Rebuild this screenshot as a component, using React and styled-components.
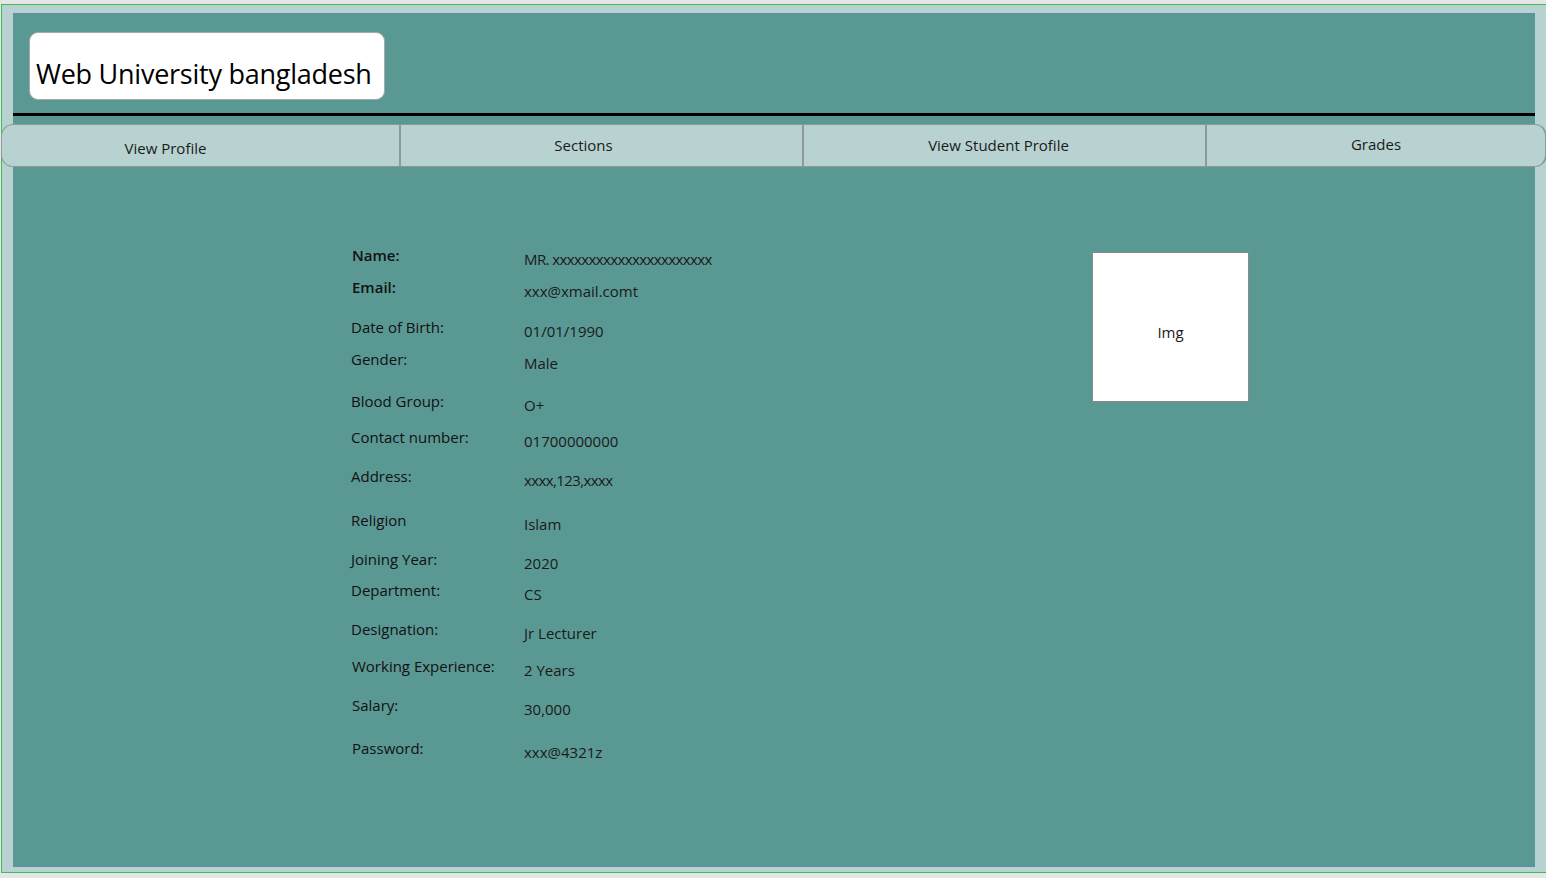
import React from 'react';
import styled, { createGlobalStyle } from 'styled-components';

const GlobalStyle = createGlobalStyle`
  html, body {
    margin: 0;
    padding: 0;
    background: #e6e6e6;
    overflow: hidden;
  }
  body {
    font-family: "Open Sans", "Noto Sans", sans-serif;
    color: #1a1a1a;
  }
`;

const Frame = styled.div`
  margin: 4px 0 0 1px;
  height: 869px;
  box-sizing: border-box;
  border: 1px solid #3cbf58;
  border-right: none;
  background: #b7d2d1;
  padding: 8px 11px 5px 11px;
`;

const Panel = styled.div`
  height: 100%;
  box-sizing: border-box;
  background: #5a9894;
  border-top: 1px solid #5b8fa6;
  border-bottom: 1px solid #5b8fa6;
  display: flex;
  flex-direction: column;
`;

const Header = styled.div`
  padding: 18px 16px 0;
  height: 86px;
  box-sizing: border-box;
`;

const Brand = styled.div`
  width: 356px;
  height: 68px;
  box-sizing: border-box;
  background: #fff;
  border: 1px solid #a8a8a8;
  border-radius: 9px;
  padding: 23px 0 0 6px;
  font-size: 27px;
  letter-spacing: -0.25px;
  line-height: 36px;
  color: #000;
  white-space: nowrap;
`;

const Rule = styled.div`
  height: 3px;
  background: #000;
  margin-top: 13px;
`;

const Nav = styled.nav`
  display: flex;
  margin: 8px -12px 0 -12px;
  height: 43px;
`;

const NavButton = styled.button`
  flex: 0 0 ${p => p.w}px;
  box-sizing: border-box;
  height: 43px;
  background: #b7d2d1;
  border: 1px solid #8c9a99;
  border-left-width: ${p => (p.first ? 1 : 0)}px;
  border-right-width: 2px;
  border-radius: ${p => (p.first ? '12px 0 0 12px' : p.last ? '0 12px 12px 0' : '0')};
  font-family: inherit;
  font-size: 15px;
  color: #1a1a1a;
  padding: ${p => Math.max(p.dy, 0)}px ${p => p.pr}px ${p => Math.max(-p.dy, 0)}px 0;
  cursor: pointer;
`;

const Content = styled.div`
  display: flex;
  padding: 78px 0 0 338px;
`;

const Details = styled.div`
  width: 741px;
`;

const Row = styled.div`
  display: flex;
  height: 20px;
  margin-top: ${p => p.gap}px;
  font-size: 15px;
  line-height: 20px;
`;

const Label = styled.div`
  width: 172px;
  padding-left: ${p => p.dx}px;
  box-sizing: border-box;
  font-weight: ${p => (p.bold ? 600 : 400)};
  color: #111;
`;

const Value = styled.div`
  padding-top: 4px;
  padding-left: 1px;
  color: #1a1a1a;
  letter-spacing: ${p => (p.tight ? '-0.6px' : '0')};
`;

const ImageBox = styled.div`
  width: 157px;
  height: 150px;
  margin-top: 7px;
  padding-top: 10px;
  box-sizing: border-box;
  background: #fff;
  border: 1px solid #8a8a8a;
  display: flex;
  align-items: center;
  justify-content: center;
  font-size: 15px;
  color: #1a1a1a;
`;

const navItems = [
  { label: 'View Profile', w: 400, pr: 70, dy: 4 },
  { label: 'Sections', w: 403, pr: 36, dy: -2 },
  { label: 'View Student Profile', w: 403, pr: 12, dy: -2 },
  { label: 'Grades', w: 340, pr: 0, dy: -4 },
];

const rows = [
  { label: 'Name:', value: 'MR. xxxxxxxxxxxxxxxxxxxxxx', gap: 0, bold: true, dx: 1, tight: true },
  { label: 'Email:', value: 'xxx@xmail.comt', gap: 12, bold: true, dx: 1 },
  { label: 'Date of Birth:', value: '01/01/1990', gap: 20, dx: -2 },
  { label: 'Gender:', value: 'Male', gap: 12, dx: 0 },
  { label: 'Blood Group:', value: 'O+', gap: 22, dx: 0 },
  { label: 'Contact number:', value: '01700000000', gap: 16, dx: 0 },
  { label: 'Address:', value: 'xxxx,123,xxxx', gap: 19, dx: 0, tight: true },
  { label: 'Religion', value: 'Islam', gap: 24, dx: 0 },
  { label: 'Joining Year:', value: '2020', gap: 19, dx: 0 },
  { label: 'Department:', value: 'CS', gap: 11, dx: 0 },
  { label: 'Designation:', value: 'Jr Lecturer', gap: 19, dx: 0 },
  { label: 'Working Experience:', value: '2 Years', gap: 17, dx: 1 },
  { label: 'Salary:', value: '30,000', gap: 19, dx: 1 },
  { label: 'Password:', value: 'xxx@4321z', gap: 23, dx: 1 },
];

export default function App() {
  return (
    <>
      <GlobalStyle />
      <Frame>
        <Panel>
          <Header>
            <Brand>Web University bangladesh</Brand>
          </Header>
          <Rule />
          <Nav>
            {navItems.map((n, i) => (
              <NavButton
                key={n.label}
                w={n.w}
                pr={n.pr}
                dy={n.dy}
                first={i === 0}
                last={i === navItems.length - 1}
              >
                {n.label}
              </NavButton>
            ))}
          </Nav>
          <Content>
            <Details>
              {rows.map(r => (
                <Row key={r.label} gap={r.gap}>
                  <Label bold={r.bold} dx={r.dx}>{r.label}</Label>
                  <Value tight={r.tight}>{r.value}</Value>
                </Row>
              ))}
            </Details>
            <ImageBox>Img</ImageBox>
          </Content>
        </Panel>
      </Frame>
    </>
  );
}
